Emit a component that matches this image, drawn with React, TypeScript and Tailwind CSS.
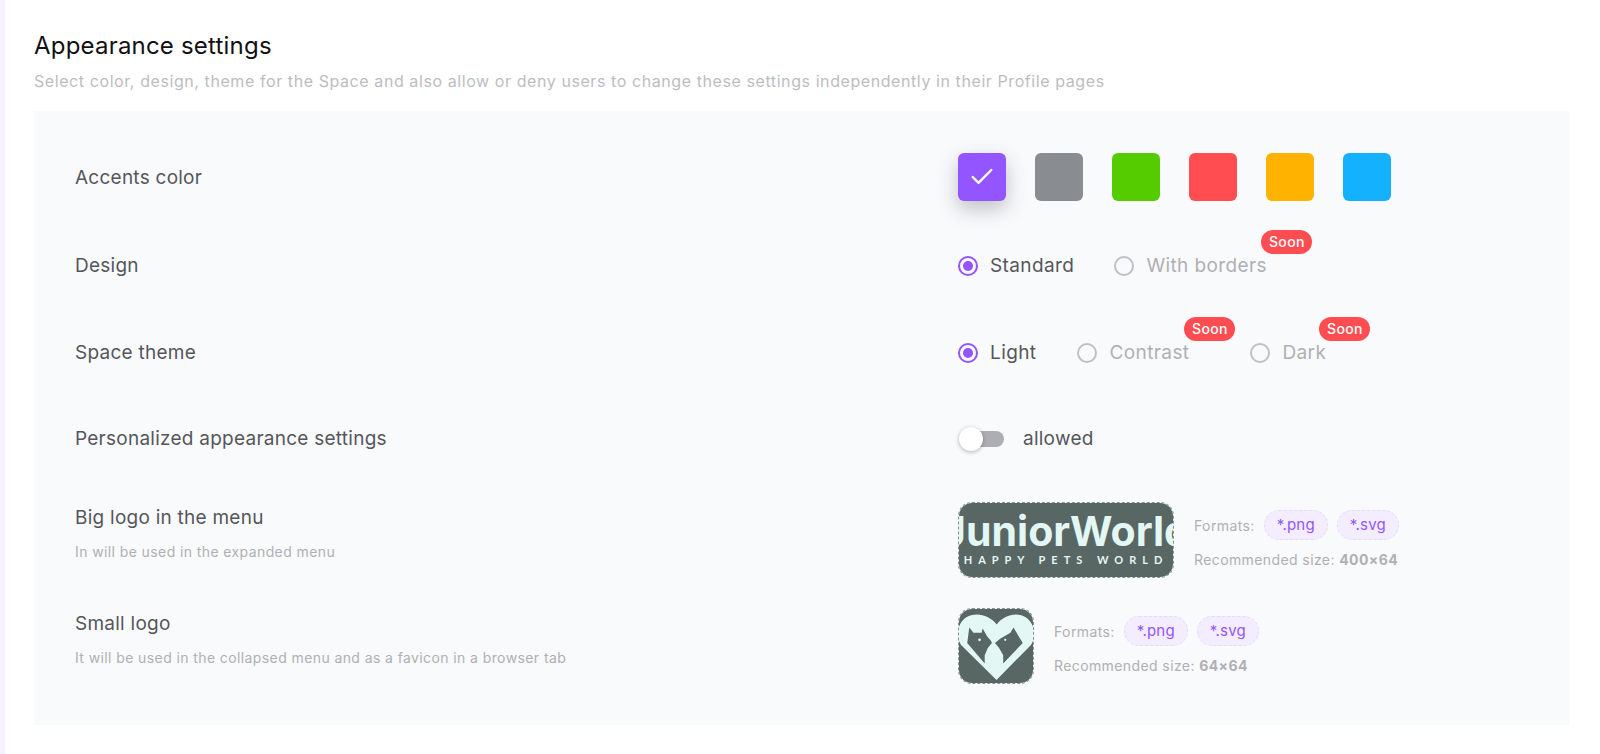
import React from 'react';
import { Check } from 'lucide-react';

const font = { fontFamily: 'Inter, "Noto Sans", sans-serif' };

const swatches = [
  { color: 'bg-[#9355ff]', selected: true },
  { color: 'bg-[#898c91]' },
  { color: 'bg-[#55cc00]' },
  { color: 'bg-[#ff4d52]' },
  { color: 'bg-[#ffb200]' },
  { color: 'bg-[#14b1ff]' },
];

const Soon = ({ className }: { className: string }) => (
  <span className={`absolute flex h-6 w-[51px] items-center justify-center rounded-full bg-[#ff4d52] text-[14px] font-medium tracking-[0.4px] text-white ${className}`}>
    Soon
  </span>
);

const Radio = ({ label, checked, children, className = '' }: { label: string; checked?: boolean; children?: React.ReactNode; className?: string }) => (
  <div className={`relative flex items-center ${className}`}>
    {checked ? (
      <span className="mr-[12px] flex h-5 w-5 items-center justify-center rounded-full border-2 border-[#9355ff]">
        <span className="h-[10px] w-[10px] rounded-full bg-[#9355ff]" />
      </span>
    ) : (
      <span className="mr-[12px] h-5 w-5 rounded-full border-2 border-[#c0c0c4]" />
    )}
    <span className={`text-[19px] leading-6 tracking-[0.4px] ${checked ? 'text-[#55565b]' : 'text-[#afb0b5]'}`}>{label}</span>
    {children}
  </div>
);

const Chip = ({ label }: { label: string }) => (
  <span className="flex h-[30px] items-center justify-center rounded-full border border-dashed border-[#e6d9ff] bg-[#f4edff] px-[12px] text-[15px] tracking-[0.2px] text-[#9355ff]">
    {label}
  </span>
);

const Formats = ({ size }: { size: string }) => (
  <div className="ml-[20px] flex flex-col">
    <div className="flex items-center">
      <span className="mr-[9px] text-[14px] tracking-[0.4px] text-[#afb0b5]">Formats:</span>
      <div className="flex gap-[9px]">
        <Chip label="*.png" />
        <Chip label="*.svg" />
      </div>
    </div>
    <div className="mt-[10px] text-[14px] leading-5 tracking-[0.4px] text-[#afb0b5]">
      Recommended size: <b className="font-bold">{size}</b>
    </div>
  </div>
);

const Label = ({ title, hint }: { title: string; hint?: string }) => (
  <div className={hint ? 'mb-[12px]' : 'pt-[1px]'}>
    <div className="text-[19px] leading-6 tracking-[0.25px] text-[#55565b]">{title}</div>
    {hint && <div className="mt-[12px] text-[14px] leading-5 tracking-[0.4px] text-[#afb0b5]">{hint}</div>}
  </div>
);

const HeartLogo = () => (
  <svg viewBox="2 2 72 72" className="h-full w-full">
    <path d="M38.5 71 L4 37 C-2 28 1 14 10 9.5 C20 5 31 8 38.7 17 C46 8 57 5 66 9.5 C75 14 78 28 72 37 Z" fill="#e3f7f4" />
    <path d="M12 20 L16 25 L24 25 L25 21 L29 28 C31 31 34 33 34 35 L30 40 L27 47 L27 55 L10 35 Z" fill="#586664" />
    <path d="M55 20 L52 25 L42 31 L37 35 L41 40 L45 47 L45 55 L64 35 Z" fill="#586664" />
    <circle cx="22" cy="32" r="1.3" fill="#e3f7f4" />
    <circle cx="47" cy="32" r="1.1" fill="#e3f7f4" />
  </svg>
);

const App: React.FC = () => {
  return (
    <div style={font} className="h-[754px] w-[1600px] overflow-hidden border-l-[5px] border-[#f7f0ff] bg-white">
      <div className="pl-[29px] pr-[31px] pt-[30px]">
        <h2 className="text-[24px] leading-8 tracking-[0.2px] text-[#111]">Appearance settings</h2>
        <p className="mt-[7px] text-[16px] leading-6 tracking-[0.58px] text-[#bcbdc2]">
          Select color, design, theme for the Space and also allow or deny users to change these settings independently in their Profile pages
        </p>

        <div className="mt-[18px] bg-[#f9fafc] pb-[41px] pl-[41px] pt-[42px]">
          <div className="grid grid-cols-[883px_1fr] items-center">
            <Label title="Accents color" />
            <div className="flex gap-[29px]">
              {swatches.map((s, i) => (
                <div
                  key={i}
                  className={`flex h-12 w-12 items-center justify-center rounded-[6px] ${s.color} ${s.selected ? 'shadow-[0_8px_20px_rgba(60,60,70,0.3)]' : ''}`}
                >
                  {s.selected && <Check size={28} strokeWidth={2} className="text-white" />}
                </div>
              ))}
            </div>
          </div>

          <div className="mt-[52px] grid grid-cols-[883px_1fr] items-center">
            <Label title="Design" />
            <div className="flex">
              <Radio label="Standard" checked />
              <Radio label="With borders" className="ml-[40px]">
                <Soon className="left-[147px] top-[-24px]" />
              </Radio>
            </div>
          </div>

          <div className="mt-[62px] grid grid-cols-[883px_1fr] items-center">
            <Label title="Space theme" />
            <div className="flex">
              <Radio label="Light" checked />
              <Radio label="Contrast" className="ml-[41px]">
                <Soon className="left-[107px] top-[-24px]" />
              </Radio>
              <Radio label="Dark" className="ml-[61px]">
                <Soon className="left-[69px] top-[-24px]" />
              </Radio>
            </div>
          </div>

          <div className="mt-[61px] grid grid-cols-[883px_1fr] items-center">
            <Label title="Personalized appearance settings" />
            <div className="flex items-center">
              <div className="relative h-6 w-[46px]">
                <div className="absolute left-[2px] top-1 h-4 w-[44px] rounded-full bg-[#aeadb3]" />
                <div className="absolute left-[1px] top-0 h-6 w-6 rounded-full bg-white shadow-[0_1px_4px_rgba(0,0,0,0.3)]" />
              </div>
              <span className="ml-[19px] text-[19px] leading-6 tracking-[0.25px] text-[#55565b]">allowed</span>
            </div>
          </div>

          <div className="mt-[51px] grid grid-cols-[883px_1fr] items-center">
            <Label title="Big logo in the menu" hint="In will be used in the expanded menu" />
            <div className="flex items-center">
              <div className="flex h-[76px] w-[216px] flex-col items-center overflow-hidden rounded-[14px] border-[1.5px] border-dashed border-[#8a9392] bg-[#586664] bg-clip-padding text-[#e3f7f4]">
                <div className="mt-[7px] whitespace-nowrap text-[41px] font-bold leading-[43px]">
                  JuniorWorld
                </div>
                <div style={{ fontFamily: 'Lato, sans-serif' }} className="whitespace-nowrap text-[11px] font-bold leading-[14px] tracking-[6px]">
                  HAPPY PETS WORLD
                </div>
              </div>
              <Formats size="400×64" />
            </div>
          </div>

          <div className="mt-[30px] grid grid-cols-[883px_1fr] items-center">
            <Label title="Small logo" hint="It will be used in the collapsed menu and as a favicon in a browser tab" />
            <div className="flex items-center">
              <div className="h-[76px] w-[76px] overflow-hidden rounded-[14px] border-[1.5px] border-dashed border-[#8a9392] bg-[#586664] bg-clip-padding">
                <HeartLogo />
              </div>
              <Formats size="64×64" />
            </div>
          </div>
        </div>
      </div>
    </div>
  );
};

export default App;
